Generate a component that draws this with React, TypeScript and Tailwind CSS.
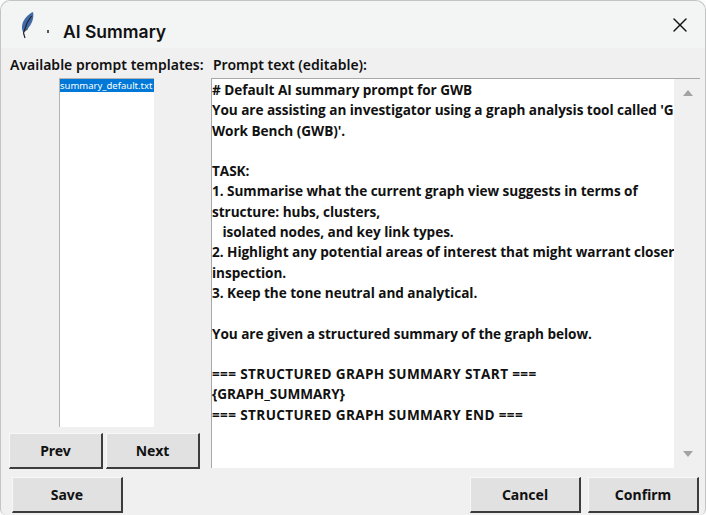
import { X } from 'lucide-react';

const PROMPT_LINES = [
  '# Default AI summary prompt for GWB',
  "You are assisting an investigator using a graph analysis tool called 'Graph",
  "Work Bench (GWB)'.",
  '',
  'TASK:',
  '1. Summarise what the current graph view suggests in terms of',
  'structure: hubs, clusters,',
  '   isolated nodes, and key link types.',
  '2. Highlight any potential areas of interest that might warrant closer',
  'inspection.',
  '3. Keep the tone neutral and analytical.',
  '',
  'You are given a structured summary of the graph below.',
  '',
  '=== STRUCTURED GRAPH SUMMARY START ===',
  '{GRAPH_SUMMARY}',
  '=== STRUCTURED GRAPH SUMMARY END ===',
];

const TkButton = ({ label, width }: { label: string; width: string }) => (
  <button className={`h-[36px] ${width} shrink-0 bg-[#e1e1e1] border-t border-l border-t-[#f8f8f8] border-l-[#f8f8f8] border-r-2 border-b-2 border-r-[#3c3c3c] border-b-[#3c3c3c] text-[14px] font-bold text-[#111]`}>
    {label}
  </button>
);

const Feather = () => (
  <svg width="18" height="28" viewBox="0 0 18 28">
    <path d="M15 1C10.5 3 6 7.5 4.5 12.5 3.6 15.5 3.8 18.5 5 21 9 19 12 15.5 14 11 15.3 7.5 15.8 4 15 1Z" fill="#3f6aa5" />
    <path d="M13.5 5 9 12 5.5 22 7 27" stroke="#20242c" strokeWidth="1.2" fill="none" />
    <path d="M5 21C6.5 20.5 8.5 19 10 17.5" stroke="#22344f" strokeWidth="1" fill="none" />
  </svg>
);

export default function App() {
  return (
    <div className="w-[706px] h-[515px] overflow-hidden bg-[#fbfbfb] font-['Noto_Sans',_'Liberation_Sans',_sans-serif]">
      <div className="w-full h-full flex flex-col rounded-t-[10px] rounded-b-[6px] bg-[#f0f0f0] border-t border-l border-r border-[#c4c4c4]">
        <div className="h-[47px] shrink-0 flex items-center rounded-t-[10px] bg-[#f3f5f5] pl-[17px] pr-[13px]">
          <Feather />
          <div className="ml-[11px] mt-[14px] w-[2px] h-[3px] bg-[#555]" />
          <span className="ml-[14px] mt-[15px] text-[17.5px] leading-6 font-semibold text-[#111] font-['Inter',_sans-serif]">AI Summary</span>
          <X className="ml-auto mt-[1px] w-[24px] h-[24px] text-[#111]" strokeWidth={1.4} />
        </div>

        <div className="flex-1 min-h-0 flex pl-[8px] pr-[5px]">
          <div className="w-[192px] shrink-0 flex flex-col">
            <div className="h-[30px] shrink-0 flex items-center pt-[4px] pl-[1px] whitespace-nowrap text-[14px] leading-5 font-semibold text-[#111]">
              Available prompt templates:
            </div>
            <div className="w-[95px] h-[349px] shrink-0 ml-[50px] bg-white border-l border-t border-[#b4b4b4]">
              <div className="bg-[#0078d7] text-white text-[9.5px] leading-[13px] whitespace-nowrap overflow-hidden">summary_default.txt</div>
            </div>
            <div className="mt-[6px] flex gap-[3px]">
              <TkButton label="Prev" width="w-[94px]" />
              <TkButton label="Next" width="w-[94px]" />
            </div>
          </div>

          <div className="flex-1 min-w-0 ml-[10px] flex flex-col">
            <div className="h-[30px] shrink-0 flex items-center pt-[4px] pl-[2px] whitespace-nowrap text-[14px] leading-5 font-semibold text-[#111]">
              Prompt text (editable):
            </div>
            <div className="h-[390px] shrink-0 flex bg-white border-l border-t border-[#a8a8a8]">
              <div className="flex-1 min-w-0 overflow-hidden pt-px text-[13.6px] leading-[20.3px] font-bold font-['Open_Sans',_sans-serif] tracking-[-0.05px] text-[#111] whitespace-pre">
                {PROMPT_LINES.map((line, i) => (
                  <div key={i} className={line.startsWith('===') ? 'h-[20.3px] tracking-[0.35px]' : 'h-[20.3px]'}>{line}</div>
                ))}
              </div>
              <div className="w-[26px] shrink-0 bg-[#f0f0f0] flex flex-col items-center justify-between pt-[11px] pb-[11px] pl-[2px]">
                <div className="w-0 h-0 border-x-[5px] border-x-transparent border-b-[6px] border-b-[#a3a3a3]" />
                <div className="w-0 h-0 border-x-[5px] border-x-transparent border-t-[6px] border-t-[#a3a3a3]" />
              </div>
            </div>
          </div>
        </div>

        <div className="h-[46px] shrink-0 flex pt-[8px] pl-[11px] pr-[6px] gap-[7px]">
          <TkButton label="Save" width="w-[111px]" />
          <div className="flex-1" />
          <TkButton label="Cancel" width="w-[111px]" />
          <TkButton label="Confirm" width="w-[111px]" />
        </div>
      </div>
    </div>
  );
}
